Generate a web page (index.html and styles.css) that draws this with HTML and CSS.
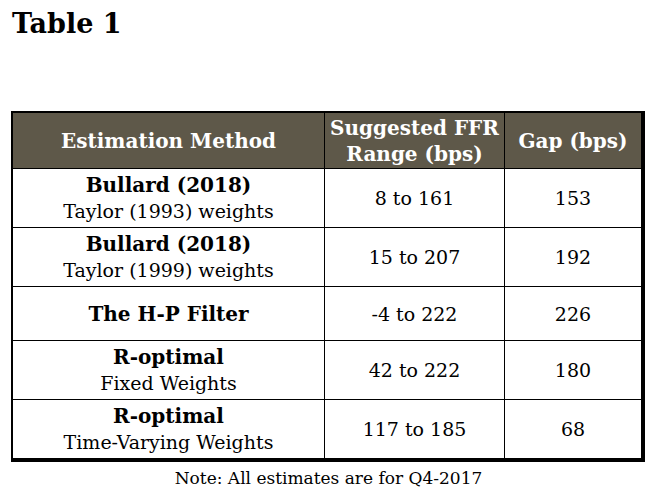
FILE: index.html
```html
<!DOCTYPE html>
<html>
<head>
<meta charset="utf-8">
<link rel="stylesheet" href="styles.css">
</head>
<body>
<h1 class="title">Table 1</h1>
<table class="data">
  <thead>
    <tr>
      <th class="c-method">Estimation Method</th>
      <th class="c-range">Suggested FFR<br>Range (bps)</th>
      <th class="c-gap">Gap (bps)</th>
    </tr>
  </thead>
  <tbody>
    <tr class="r-tall">
      <td><b>Bullard (2018)</b><br>Taylor (1993) weights</td>
      <td>8 to 161</td>
      <td>153</td>
    </tr>
    <tr class="r-tall">
      <td><b>Bullard (2018)</b><br>Taylor (1999) weights</td>
      <td>15 to 207</td>
      <td>192</td>
    </tr>
    <tr class="r-short">
      <td><b>The H-P Filter</b></td>
      <td>-4 to 222</td>
      <td>226</td>
    </tr>
    <tr class="r-tall">
      <td><b>R-optimal</b><br>Fixed Weights</td>
      <td>42 to 222</td>
      <td>180</td>
    </tr>
    <tr class="r-tall">
      <td><b>R-optimal</b><br>Time-Varying Weights</td>
      <td>117 to 185</td>
      <td>68</td>
    </tr>
  </tbody>
</table>
<p class="note">Note: All estimates are for Q4-2017</p>
</body>
</html>
```
FILE: styles.css
```css
html, body {
  margin: 0;
  padding: 0;
  background: #ffffff;
}
body {
  font-family: "DejaVu Serif", "Liberation Serif", serif;
  color: #000;
  width: 657px;
}
.title {
  margin: 0;
  padding: 8px 0 0 12px;
  height: 111px;
  box-sizing: border-box;
  font-size: 27px;
  font-weight: bold;
  line-height: 32px;
}
.data {
  margin-left: 11px;
  width: 634px;
  border-collapse: collapse;
  border-top: 2px solid #000;
  border-left: 2px solid #000;
  border-right: 4px solid #000;
  border-bottom: 4px solid #000;
  table-layout: fixed;
  font-size: 19px;
  line-height: 26px;
}
.data th {
  background: #5e5849;
  color: #fff;
  font-size: 20px;
  font-weight: bold;
  height: 55px;
  padding: 0;
  text-align: center;
  vertical-align: middle;
  border-left: 1px solid #000;
  border-bottom: 1px solid #000;
  line-height: 26px;
}
.data th:first-child { border-left: 0; }
.c-method { width: 311px; }
.c-range { width: 179px; }
.data td {
  text-align: center;
  vertical-align: middle;
  padding: 0;
  border-left: 1px solid #000;
  border-top: 1px solid #000;
}
.data td:first-child { border-left: 0; }
.data tbody tr:first-child td { border-top: 0; }
.r-tall td { height: 58px; }
.r-short td { height: 53px; }
.data td b { font-weight: bold; font-size: 20px; }
.note {
  margin: 6px 0 0 0;
  text-align: center;
  font-size: 17px;
  line-height: 20px;
}
```
